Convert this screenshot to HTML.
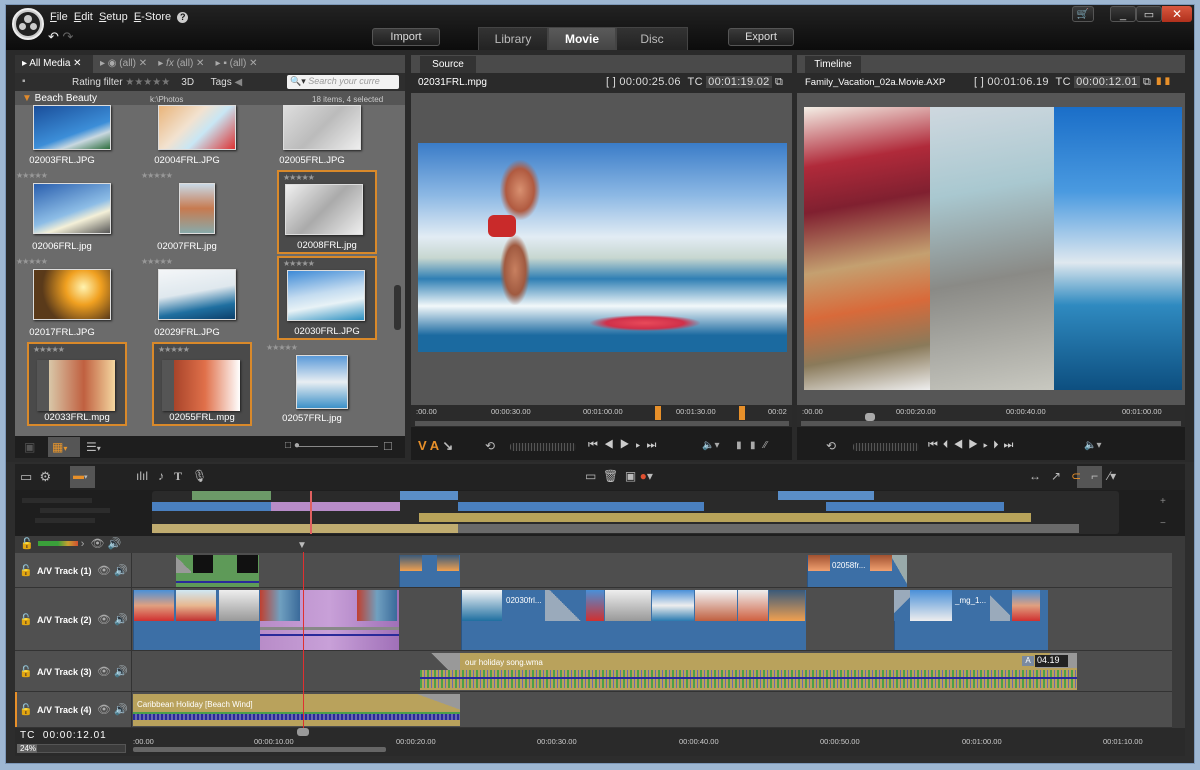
<!DOCTYPE html>
<html><head><meta charset="utf-8"><style>
*{margin:0;padding:0;box-sizing:border-box}
body{width:1200px;height:770px;overflow:hidden;background:#9eb7d2;font-family:"Liberation Sans",sans-serif;font-size:10px;color:#ddd;position:relative}
.a{position:absolute}
.t{position:absolute;white-space:nowrap}
.btn{position:absolute;background:linear-gradient(#3a3a3a,#1e1e1e);border:1px solid #555;border-radius:3px;color:#ddd;font-size:11px;text-align:center;line-height:16px}
.tab{position:absolute;background:linear-gradient(#333,#222);color:#bbb;font-size:12px;text-align:center;line-height:23px;border:1px solid #444;border-bottom:none}
.cell{position:absolute;width:100px;height:84px}
.cell.sel{background:#4a4a4a;border:2px solid #d9892a}
.cell .img{position:absolute;left:21px;top:13px;width:78px;height:51px;box-shadow:1px 1px 2px #222;border:1px solid #ddd}
.cell .lbl{position:absolute;left:0;width:100%;top:65px;text-align:center;font-size:9.5px;color:#fff}
.cell .st{position:absolute;left:4px;top:1px;color:#999;font-size:8px;letter-spacing:-1px}
.clip{position:absolute;background:#3c6fa6;border-left:1px solid #2b5584}
.trk{position:absolute;left:15px;width:1157px;background:#4e4e4e;border-bottom:1px solid #333}
.trk .hd{position:absolute;left:0;top:0;width:117px;height:100%;background:#505050;border-right:1px solid #333}
.trk .nm{position:absolute;left:22px;font-size:9px;color:#fff;font-weight:bold}
.ic{position:absolute;color:#aaa;font-size:11px}
</style></head><body>
<div class="a" style="left:5px;top:4px;width:1190px;height:760px;background:#2d2d2d;border:1px solid #7d98b8"></div>
<div class="a" style="left:6px;top:5px;width:1188px;height:45px;background:linear-gradient(#232323,#0c0c0c)"></div>
<div class="a" style="left:12px;top:8px;width:32px;height:32px;border-radius:50%;background:#ccc;border:2px solid #eee"></div>
<div class="a" style="left:16px;top:12px;width:24px;height:24px;border-radius:50%;background:#222"></div>
<div class="a" style="left:24px;top:15px;width:8px;height:8px;border-radius:50%;background:#ccc"></div>
<div class="a" style="left:19px;top:23px;width:7px;height:7px;border-radius:50%;background:#ccc"></div>
<div class="a" style="left:30px;top:23px;width:7px;height:7px;border-radius:50%;background:#ccc"></div>
<div class="t" style="left:50px;top:11px;font-size:11px;color:#eee"><u>F</u>ile &nbsp;<u>E</u>dit &nbsp;<u>S</u>etup &nbsp;<u>E</u>-Store &nbsp;<span style="display:inline-block;width:11px;height:11px;border-radius:50%;background:#ccc;color:#111;font-size:9px;text-align:center;line-height:11px;font-weight:bold">?</span></div>
<div class="t" style="left:48px;top:29px;font-size:13px;color:#eee">↶ <span style="color:#666">↷</span></div>
<div class="btn" style="left:372px;top:28px;width:68px;height:18px">Import</div>
<div class="btn" style="left:728px;top:28px;width:66px;height:18px">Export</div>
<div class="tab" style="left:478px;top:27px;width:70px">Library</div>
<div class="tab" style="left:548px;top:27px;width:68px;background:linear-gradient(#5a5a5a,#444);color:#fff;font-weight:bold">Movie</div>
<div class="tab" style="left:616px;top:27px;width:72px">Disc</div>
<div class="btn" style="left:1072px;top:6px;width:22px;height:16px;font-size:10px">🛒</div>
<div class="btn" style="left:1110px;top:6px;width:26px;height:16px">_</div>
<div class="btn" style="left:1136px;top:6px;width:26px;height:16px">▭</div>
<div class="a" style="left:1162px;top:6px;width:30px;height:16px;background:linear-gradient(#d9583f,#b0301c);color:#fff;text-align:center;font-size:12px;line-height:16px;border-radius:0 3px 3px 0">✕</div>
<div class="a" style="left:6px;top:50px;width:1188px;height:412px;background:#2a2a2a"></div>

<div class="a" style="left:15px;top:55px;width:390px;height:18px;background:#4a4a4a"></div>
<div class="a" style="left:15px;top:55px;width:78px;height:18px;background:#333"></div>
<div class="t" style="left:22px;top:58px;font-size:10px;color:#fff">▸ All Media ✕</div>
<div class="t" style="left:100px;top:58px;color:#aaa">▸ ◉ (all) ✕ &nbsp;&nbsp; ▸ <i>fx</i> (all) ✕ &nbsp;&nbsp; ▸ ▪ (all) ✕</div>
<div class="a" style="left:15px;top:73px;width:390px;height:18px;background:#2e2e2e"></div>
<div class="t" style="left:22px;top:76px;color:#aaa">▪</div>
<div class="t" style="left:72px;top:77px;color:#ddd">Rating filter <span style="color:#777">★★★★★</span> &nbsp;&nbsp; 3D &nbsp;&nbsp;&nbsp;&nbsp; Tags <span style="color:#888">◀</span></div>
<div class="a" style="left:287px;top:75px;width:112px;height:14px;background:#f2f2f2;border-radius:2px"></div>
<div class="t" style="left:290px;top:76px;color:#999;font-size:9px;font-style:italic"><span style="color:#333;font-style:normal">🔍▾</span> Search your curre</div>
<div class="a" style="left:15px;top:91px;width:390px;height:345px;background:#6b6b6b"></div>

<div class="cell" style="left:12px;top:85px;height:82px"><div class="img" style="top:20px;height:45px;background:linear-gradient(160deg,#1a4e9a,#3c8ed8 60%,#c9d8e0 75%,#2d6d3d)"></div><div class="lbl" style="top:70px">02003FRL.JPG</div></div>
<div class="cell" style="left:137px;top:85px;height:82px"><div class="img" style="top:20px;height:45px;background:linear-gradient(135deg,#e9b47a,#f2e2d0 40%,#c8e6f4 60%,#d33)"></div><div class="lbl" style="top:70px">02004FRL.JPG</div></div>
<div class="cell" style="left:262px;top:85px;height:82px"><div class="img" style="top:20px;height:45px;background:linear-gradient(135deg,#ddd,#bbb 50%,#eee)"></div><div class="lbl" style="top:70px">02005FRL.JPG</div></div>

<div class="a" style="left:15px;top:91px;width:390px;height:14px;background:#555"></div>
<div class="t" style="left:22px;top:93px;color:#fff;font-size:10px"><span style="color:#e08a2c">▼</span> Beach Beauty</div>
<div class="t" style="left:150px;top:95px;font-size:8px;color:#ccc">k:\Photos</div>
<div class="t" style="left:312px;top:95px;font-size:8px;color:#ccc">18 items, 4 selected</div>
<div class="a" style="left:394px;top:285px;width:7px;height:45px;background:#333;border-radius:3px"></div>

<div class="cell" style="left:12px;top:170px"><div class="st">★★★★★</div><div class="img" style="top:13px;background:linear-gradient(160deg,#2a5fae,#8dbde6 55%,#f4f0d8 70%,#555)"></div><div class="lbl" style="top:71px">02006FRL.jpg</div></div>
<div class="cell" style="left:137px;top:170px"><div class="st">★★★★★</div><div class="img" style="left:42px;width:36px;top:13px;background:linear-gradient(#c9d9e6,#c77a50 50%,#8aa)"></div><div class="lbl" style="top:71px">02007FRL.jpg</div></div>
<div class="cell sel" style="left:277px;top:170px"><div class="st">★★★★★</div><div class="img" style="left:6px;top:12px;background:linear-gradient(135deg,#f0f0f0,#aaa 50%,#eee)"></div><div class="lbl" style="top:68px">02008FRL.jpg</div></div>

<div class="cell" style="left:12px;top:256px"><div class="st">★★★★★</div><div class="img" style="top:13px;background:radial-gradient(circle at 65% 35%,#fff3b0,#f0a020 30%,#5a3a1a 70%)"></div><div class="lbl" style="top:71px">02017FRL.JPG</div></div>
<div class="cell" style="left:137px;top:256px"><div class="st">★★★★★</div><div class="img" style="top:13px;background:linear-gradient(170deg,#f4f6f8,#dfe8ee 45%,#1f6fa0 75%,#0c3f6a)"></div><div class="lbl" style="top:71px">02029FRL.JPG</div></div>
<div class="cell sel" style="left:277px;top:256px"><div class="st">★★★★★</div><div class="img" style="left:8px;top:12px;background:linear-gradient(170deg,#3d8ad6,#c4dcf0 45%,#e8f2f6 65%,#2a8fc0)"></div><div class="lbl" style="top:68px">02030FRL.JPG</div></div>

<div class="cell sel" style="left:27px;top:342px"><div class="st">★★★★★</div><div class="img" style="left:8px;top:16px;border:none;background:linear-gradient(90deg,#555 12px,#d9c7a8 12px,#c06040 60%,#f4d7a0)"></div><div class="lbl" style="top:68px">02033FRL.mpg</div></div>
<div class="cell sel" style="left:152px;top:342px"><div class="st">★★★★★</div><div class="img" style="left:8px;top:16px;border:none;background:linear-gradient(90deg,#555 12px,#a8442a 12px,#e0704a 55%,#fff)"></div><div class="lbl" style="top:68px">02055FRL.mpg</div></div>
<div class="cell" style="left:262px;top:342px"><div class="st">★★★★★</div><div class="img" style="left:34px;width:52px;height:54px;top:13px;background:linear-gradient(#5a9ad8,#e8eef2 50%,#3c90c8)"></div><div class="lbl" style="top:71px">02057FRL.jpg</div></div>

<div class="a" style="left:15px;top:436px;width:390px;height:22px;background:#1e1e1e"></div>
<div class="a" style="left:48px;top:437px;width:32px;height:20px;background:#555"></div>
<div class="t" style="left:52px;top:440px;color:#e8962c;font-size:12px">▦<span style="font-size:8px">▾</span></div>
<div class="t" style="left:86px;top:440px;color:#bbb;font-size:12px">☰<span style="font-size:8px">▾</span></div>
<div class="t" style="left:24px;top:440px;color:#555;font-size:12px">▣</div>
<div class="a" style="left:298px;top:446px;width:80px;height:1px;background:#888"></div>
<div class="t" style="left:285px;top:440px;color:#aaa">□ ●</div>
<div class="t" style="left:384px;top:438px;color:#aaa;font-size:13px">□</div>

<div class="a" style="left:411px;top:55px;width:381px;height:18px;background:#4a4a4a"></div>
<div class="a" style="left:420px;top:56px;width:56px;height:17px;background:#333;text-align:center;line-height:17px;color:#fff;font-size:10px">Source</div>
<div class="a" style="left:411px;top:73px;width:381px;height:19px;background:#2a2a2a"></div>
<div class="t" style="left:418px;top:77px;color:#fff">02031FRL.mpg</div>
<div class="t" style="left:606px;top:76px;color:#ddd;font-size:11px;letter-spacing:.3px">[ ] 00:00:25.06 &nbsp;TC <span style="background:#444;padding:0 2px">00:01:19.02</span> ⧉</div>
<div class="a" style="left:411px;top:93px;width:381px;height:312px;background:#565656"></div>
<div class="a" style="left:418px;top:143px;width:369px;height:209px;background:linear-gradient(180deg,#3a7cc8 0%,#8cb8e4 25%,#e2ecf4 45%,#c7d7d0 55%,#2f7fb4 65%,#f2f8fa 78%,#1b6aa0 92%)"></div>
<div class="a" style="left:500px;top:160px;width:40px;height:60px;background:radial-gradient(ellipse,#d89070,#b05a40 50%,transparent 72%)"></div>
<div class="a" style="left:488px;top:215px;width:28px;height:22px;background:#c92a2a;border-radius:6px"></div>
<div class="a" style="left:500px;top:235px;width:30px;height:70px;background:radial-gradient(ellipse,#c88060,#a05a40 50%,transparent 72%)"></div>
<div class="a" style="left:590px;top:315px;width:110px;height:16px;background:radial-gradient(ellipse,#e84a5a,#d0304a 50%,transparent 72%)"></div>
<div class="a" style="left:411px;top:405px;width:381px;height:22px;background:#2b2b2b"></div>
<div class="t" style="left:416px;top:407px;font-size:7.5px;color:#ccc">:00.00</div>
<div class="t" style="left:491px;top:407px;font-size:7.5px;color:#ccc">00:00:30.00</div>
<div class="t" style="left:583px;top:407px;font-size:7.5px;color:#ccc">00:01:00.00</div>
<div class="t" style="left:676px;top:407px;font-size:7.5px;color:#ccc">00:01:30.00</div>
<div class="t" style="left:768px;top:407px;font-size:7.5px;color:#ccc">00:02</div>
<div class="a" style="left:655px;top:406px;width:6px;height:14px;background:#e8902a"></div>
<div class="a" style="left:739px;top:406px;width:6px;height:14px;background:#e8902a"></div>
<div class="a" style="left:415px;top:421px;width:374px;height:5px;background:#555"></div>
<div class="a" style="left:411px;top:427px;width:381px;height:33px;background:#1c1c1c"></div>
<div class="t" style="left:418px;top:438px;font-size:13px;color:#e8902a;font-weight:bold">V A <span style="color:#bbb">↘</span></div>
<div class="t" style="left:485px;top:439px;font-size:12px;color:#bbb">⟲</div>
<div class="a" style="left:510px;top:443px;width:66px;height:8px;background:repeating-linear-gradient(90deg,#555 0 1px,#222 1px 3px);border-radius:3px"></div>
<div class="t" style="left:588px;top:439px;font-size:11px;color:#ccc;letter-spacing:6px">⏮◀▶▸⏭</div>
<div class="t" style="left:702px;top:440px;font-size:10px;color:#aaa">🔈▾ &nbsp;&nbsp;&nbsp;&nbsp; ▮ &nbsp; ▮ &nbsp; ⁄⁄</div>

<div class="a" style="left:797px;top:55px;width:388px;height:18px;background:#4a4a4a"></div>
<div class="a" style="left:805px;top:56px;width:56px;height:17px;background:#333;text-align:center;line-height:17px;color:#fff;font-size:10px">Timeline</div>
<div class="a" style="left:797px;top:73px;width:388px;height:19px;background:#2a2a2a"></div>
<div class="t" style="left:805px;top:77px;color:#fff;font-size:9.5px">Family_Vacation_02a.Movie.AXP</div>
<div class="t" style="left:974px;top:76px;color:#ddd;font-size:11px;letter-spacing:.3px">[ ] 00:01:06.19 &nbsp;TC <span style="background:#444;padding:0 2px">00:00:12.01</span> ⧉ <span style="color:#e8902a">▮▮</span></div>
<div class="a" style="left:797px;top:93px;width:388px;height:312px;background:#565656"></div>
<div class="a" style="left:804px;top:107px;width:126px;height:283px;background:linear-gradient(170deg,#f4efe6 0%,#b02a3a 20%,#802030 35%,#c4a070 55%,#d86a3a 70%,#8a7a5a 85%,#eee)"></div>
<div class="a" style="left:930px;top:107px;width:124px;height:283px;background:linear-gradient(170deg,#cfd8df,#a9c8d0 30%,#8a8a86 60%,#c8c8c0)"></div>
<div class="a" style="left:1054px;top:107px;width:128px;height:283px;background:linear-gradient(180deg,#1a6ec8,#4a9ae0 30%,#dfe8ef 55%,#2f8ac0 70%,#0d4f80)"></div>
<div class="a" style="left:797px;top:405px;width:388px;height:22px;background:#2b2b2b"></div>
<div class="t" style="left:802px;top:407px;font-size:7.5px;color:#ccc">:00.00</div>
<div class="t" style="left:896px;top:407px;font-size:7.5px;color:#ccc">00:00:20.00</div>
<div class="t" style="left:1006px;top:407px;font-size:7.5px;color:#ccc">00:00:40.00</div>
<div class="t" style="left:1122px;top:407px;font-size:7.5px;color:#ccc">00:01:00.00</div>
<div class="a" style="left:865px;top:413px;width:10px;height:8px;background:#aaa;border-radius:3px"></div>
<div class="a" style="left:801px;top:421px;width:380px;height:5px;background:#555"></div>
<div class="a" style="left:797px;top:427px;width:388px;height:33px;background:#1c1c1c"></div>
<div class="t" style="left:826px;top:439px;font-size:12px;color:#bbb">⟲</div>
<div class="a" style="left:853px;top:443px;width:66px;height:8px;background:repeating-linear-gradient(90deg,#555 0 1px,#222 1px 3px);border-radius:3px"></div>
<div class="t" style="left:928px;top:439px;font-size:11px;color:#ccc;letter-spacing:5px">⏮⏴◀▶▸⏵⏭</div>
<div class="t" style="left:1084px;top:440px;font-size:10px;color:#aaa">🔈▾</div>

<div class="a" style="left:15px;top:464px;width:1170px;height:26px;background:#222"></div>
<div class="t" style="left:20px;top:469px;font-size:13px;color:#bbb">▭ &nbsp;⚙</div>
<div class="a" style="left:70px;top:466px;width:25px;height:22px;background:#555"></div>
<div class="t" style="left:73px;top:470px;color:#e8902a;font-size:11px">▬<span style="color:#bbb;font-size:7px">▾</span></div>
<div class="t" style="left:136px;top:469px;font-size:12px;color:#bbb">ılıl &nbsp;&nbsp;♪ &nbsp;&nbsp;<b style="font-family:'Liberation Serif'">T</b> &nbsp;&nbsp;🎙</div>
<div class="t" style="left:585px;top:469px;font-size:12px;color:#bbb">▭ &nbsp;🗑 &nbsp;▣ <span style="color:#e05030">●</span>▾</div>
<div class="a" style="left:1077px;top:466px;width:25px;height:22px;background:#555"></div>
<div class="t" style="left:1029px;top:469px;font-size:12px;color:#bbb">↔ &nbsp;&nbsp;↗ &nbsp;&nbsp;<span style="color:#e8902a">⊂</span> &nbsp;&nbsp;⌐ &nbsp;&nbsp;⁄▾</div>
<div class="a" style="left:15px;top:490px;width:1170px;height:46px;background:#1e1e1e"></div>
<div class="a" style="left:22px;top:498px;width:70px;height:5px;background:#2c2c2c"></div>
<div class="a" style="left:40px;top:508px;width:70px;height:5px;background:#2c2c2c"></div>
<div class="a" style="left:35px;top:518px;width:60px;height:5px;background:#2c2c2c"></div>
<div class="a" style="left:152px;top:491px;width:967px;height:43px;background:#2a2a2a;border-radius:3px"></div>
<div class="a" style="left:192px;top:491px;width:79px;height:9px;background:#6c9a68"></div>
<div class="a" style="left:400px;top:491px;width:58px;height:9px;background:#5a8ec8"></div>
<div class="a" style="left:778px;top:491px;width:96px;height:9px;background:#5a8ec8"></div>
<div class="a" style="left:152px;top:502px;width:119px;height:9px;background:#4a80c0"></div>
<div class="a" style="left:271px;top:502px;width:129px;height:9px;background:#b88cc8"></div>
<div class="a" style="left:458px;top:502px;width:246px;height:9px;background:#4a80c0"></div>
<div class="a" style="left:826px;top:502px;width:178px;height:9px;background:#4a80c0"></div>
<div class="a" style="left:419px;top:513px;width:612px;height:9px;background:#b8a35a"></div>
<div class="a" style="left:152px;top:524px;width:306px;height:9px;background:#c0ac70"></div>
<div class="a" style="left:458px;top:524px;width:621px;height:9px;background:#6a6a6a"></div>
<div class="a" style="left:310px;top:491px;width:2px;height:43px;background:#e06060"></div>
<div class="t" style="left:1160px;top:496px;color:#888">+<br><br>−</div>
<div class="a" style="left:15px;top:536px;width:1170px;height:17px;background:#3a3a3a"></div>
<div class="a" style="left:38px;top:541px;width:40px;height:5px;background:linear-gradient(90deg,#3aa03a,#3aa03a 50%,#c8a030,#d05030)"></div>
<div class="t" style="left:20px;top:537px;color:#aaa;font-size:11px">🔓 <span style="margin-left:44px">›</span> &nbsp;👁 🔊</div>
<div class="t" style="left:297px;top:540px;color:#bbb;font-size:10px">▼</div>
<div class="a" style="left:1172px;top:553px;width:13px;height:175px;background:#3a3a3a"></div>

<div class="trk" style="top:553px;height:35px"><div class="hd"></div><div class="nm" style="top:13px">A/V Track (1)</div><div class="ic" style="left:4px;top:11px">🔓</div><div class="ic" style="left:82px;top:11px">👁 🔊</div></div>
<div class="trk" style="top:588px;height:63px"><div class="hd"></div><div class="nm" style="top:27px">A/V Track (2)</div><div class="ic" style="left:4px;top:25px">🔓</div><div class="ic" style="left:82px;top:25px">👁 🔊</div></div>
<div class="trk" style="top:651px;height:41px"><div class="hd"></div><div class="nm" style="top:16px">A/V Track (3)</div><div class="ic" style="left:4px;top:14px">🔓</div><div class="ic" style="left:82px;top:14px">👁 🔊</div></div>
<div class="trk" style="top:692px;height:36px;"><div class="hd" style="border-left:2px solid #e8902a"></div><div class="nm" style="top:13px">A/V Track (4)</div><div class="ic" style="left:4px;top:11px">🔓</div><div class="ic" style="left:82px;top:11px">👁 🔊</div></div>

<div class="a" style="left:176px;top:555px;width:83px;height:32px;background:#5e9a58"></div>
<div class="a" style="left:176px;top:555px;width:15px;height:18px;background:linear-gradient(225deg,#5e9a58 50%,#999 50%)"></div>
<div class="a" style="left:193px;top:555px;width:20px;height:18px;background:#111"></div>
<div class="a" style="left:237px;top:555px;width:21px;height:18px;background:#111"></div>
<div class="a" style="left:176px;top:581px;width:83px;height:2px;background:#2a2a9a"></div>
<div class="clip" style="left:399px;top:555px;width:61px;height:32px"></div>
<div class="a" style="left:400px;top:555px;width:22px;height:16px;background:linear-gradient(#3a5a7a,#f0a050)"></div>
<div class="a" style="left:437px;top:555px;width:22px;height:16px;background:linear-gradient(#3a5a7a,#f0a050)"></div>
<div class="clip" style="left:807px;top:555px;width:100px;height:32px"></div>
<div class="a" style="left:808px;top:555px;width:22px;height:16px;background:linear-gradient(#a05030,#f0a070)"></div>
<div class="t" style="left:832px;top:561px;color:#fff;font-size:8px">02058fr...</div>
<div class="a" style="left:870px;top:555px;width:22px;height:16px;background:linear-gradient(#a05030,#f0a070)"></div>
<div class="a" style="left:892px;top:555px;width:15px;height:32px;background:linear-gradient(60deg,#3c6fa6 50%,#9aa 50%)"></div>
<div class="clip" style="left:133px;top:590px;width:127px;height:60px"></div>
<div class="a" style="left:134px;top:590px;width:40px;height:31px;background:linear-gradient(#4a90d8,#e0a080 50%,#d03030)"></div>
<div class="a" style="left:176px;top:590px;width:40px;height:31px;background:linear-gradient(#cfe8f4,#e8b890 50%,#c03030)"></div>
<div class="a" style="left:219px;top:590px;width:40px;height:31px;background:linear-gradient(#eee,#999)"></div>
<div class="a" style="left:260px;top:590px;width:139px;height:60px;background:linear-gradient(90deg,#b88cc8,#c8a0d8 50%,#a070b8)"></div>
<div class="a" style="left:260px;top:590px;width:40px;height:31px;background:linear-gradient(90deg,#c04030,#70a0c0,#3a6a9a)"></div>
<div class="a" style="left:357px;top:590px;width:40px;height:31px;background:linear-gradient(90deg,#c04030,#70a0c0,#3a6a9a)"></div>
<div class="a" style="left:260px;top:627px;width:139px;height:3px;background:#888"></div>
<div class="a" style="left:260px;top:634px;width:139px;height:2px;background:#2a2a9a"></div>
<div class="clip" style="left:461px;top:590px;width:345px;height:60px"></div>
<div class="a" style="left:462px;top:590px;width:40px;height:31px;background:linear-gradient(#f4f6f8,#1f6fa0)"></div>
<div class="t" style="left:506px;top:596px;color:#fff;font-size:8px">02030frl...</div>
<div class="a" style="left:545px;top:590px;width:40px;height:31px;background:linear-gradient(225deg,#3c6fa6 50%,#9aaabb 50%)"></div>
<div class="a" style="left:586px;top:590px;width:18px;height:31px;background:linear-gradient(#4a90d8,#d03030)"></div>
<div class="a" style="left:605px;top:590px;width:46px;height:31px;background:linear-gradient(#eee,#999)"></div>
<div class="a" style="left:652px;top:590px;width:42px;height:31px;background:linear-gradient(#4a90d8,#eee 50%,#2a7ab0)"></div>
<div class="a" style="left:695px;top:590px;width:42px;height:31px;background:linear-gradient(#f4f6f8,#c06040)"></div>
<div class="a" style="left:738px;top:590px;width:30px;height:31px;background:linear-gradient(#eee,#d06040)"></div>
<div class="a" style="left:769px;top:590px;width:36px;height:31px;background:linear-gradient(#3a5a7a,#f0a050)"></div>
<div class="clip" style="left:894px;top:590px;width:154px;height:60px"></div>
<div class="a" style="left:894px;top:590px;width:16px;height:31px;background:linear-gradient(315deg,#3c6fa6 50%,#9aaabb 50%)"></div>
<div class="a" style="left:910px;top:590px;width:42px;height:31px;background:linear-gradient(#4a90d8,#eee)"></div>
<div class="t" style="left:955px;top:596px;color:#fff;font-size:8px">_mg_1...</div>
<div class="a" style="left:990px;top:590px;width:20px;height:31px;background:linear-gradient(225deg,#3c6fa6 50%,#9aaabb 50%)"></div>
<div class="a" style="left:1012px;top:590px;width:28px;height:31px;background:linear-gradient(#4a90d8,#e0a080 50%,#d03030)"></div>
<div class="a" style="left:420px;top:653px;width:657px;height:37px;background:#b9a25c"></div>
<div class="a" style="left:420px;top:653px;width:40px;height:18px;background:linear-gradient(225deg,#999 50%,#4e4e4e 50%)"></div>
<div class="t" style="left:465px;top:658px;color:#fff;font-size:8px">our holiday song.wma</div>
<div class="a" style="left:420px;top:670px;width:657px;height:18px;background:repeating-linear-gradient(90deg,#4aa04a 0 2px,#b9a25c 2px 4px,#6a6ab0 4px 5px,#b9a25c 5px 7px)"></div>
<div class="a" style="left:420px;top:677px;width:657px;height:2px;background:#2a2a9a"></div>
<div class="a" style="left:1010px;top:653px;width:67px;height:15px;background:linear-gradient(315deg,#999 50%,#b9a25c 50%)"></div>
<div class="a" style="left:1022px;top:656px;width:12px;height:10px;background:#7a8aa0;color:#fff;font-size:8px;text-align:center">A</div>
<div class="a" style="left:1035px;top:655px;width:33px;height:12px;background:#222;color:#fff;font-size:9px;padding-left:2px">04.19</div>
<div class="a" style="left:133px;top:694px;width:327px;height:32px;background:#b9a25c"></div>
<div class="t" style="left:137px;top:700px;color:#fff;font-size:8px">Caribbean Holiday [Beach Wind]</div>
<div class="a" style="left:418px;top:694px;width:42px;height:16px;background:linear-gradient(20deg,#b9a25c 50%,#999 50%)"></div>
<div class="a" style="left:133px;top:714px;width:327px;height:6px;background:repeating-linear-gradient(90deg,#2a2a9a 0 2px,#6a6ab0 2px 4px)"></div>
<div class="a" style="left:133px;top:712px;width:327px;height:2px;background:#4aa04a"></div>
<div class="a" style="left:303px;top:552px;width:1px;height:185px;background:#e03030"></div>
<div class="a" style="left:15px;top:728px;width:1170px;height:28px;background:#2a2a2a"></div>
<div class="t" style="left:20px;top:730px;color:#fff;font-size:10px;letter-spacing:1px">TC &nbsp;00:00:12.01</div>
<div class="a" style="left:17px;top:744px;width:109px;height:9px;background:#3c3c3c;border:1px solid #555"></div>
<div class="a" style="left:17px;top:744px;width:20px;height:9px;background:#666"></div>
<div class="t" style="left:20px;top:744px;color:#fff;font-size:8px">24%</div>
<div class="t" style="left:133px;top:737px;color:#ccc;font-size:7.5px">:00.00</div>
<div class="t" style="left:254px;top:737px;color:#ccc;font-size:7.5px">00:00:10.00</div>
<div class="t" style="left:396px;top:737px;color:#ccc;font-size:7.5px">00:00:20.00</div>
<div class="t" style="left:537px;top:737px;color:#ccc;font-size:7.5px">00:00:30.00</div>
<div class="t" style="left:679px;top:737px;color:#ccc;font-size:7.5px">00:00:40.00</div>
<div class="t" style="left:820px;top:737px;color:#ccc;font-size:7.5px">00:00:50.00</div>
<div class="t" style="left:962px;top:737px;color:#ccc;font-size:7.5px">00:01:00.00</div>
<div class="t" style="left:1103px;top:737px;color:#ccc;font-size:7.5px">00:01:10.00</div>
<div class="a" style="left:297px;top:728px;width:12px;height:8px;background:#999;border-radius:3px"></div>
<div class="a" style="left:133px;top:747px;width:253px;height:5px;background:#666;border-radius:2px"></div>
</body></html>
